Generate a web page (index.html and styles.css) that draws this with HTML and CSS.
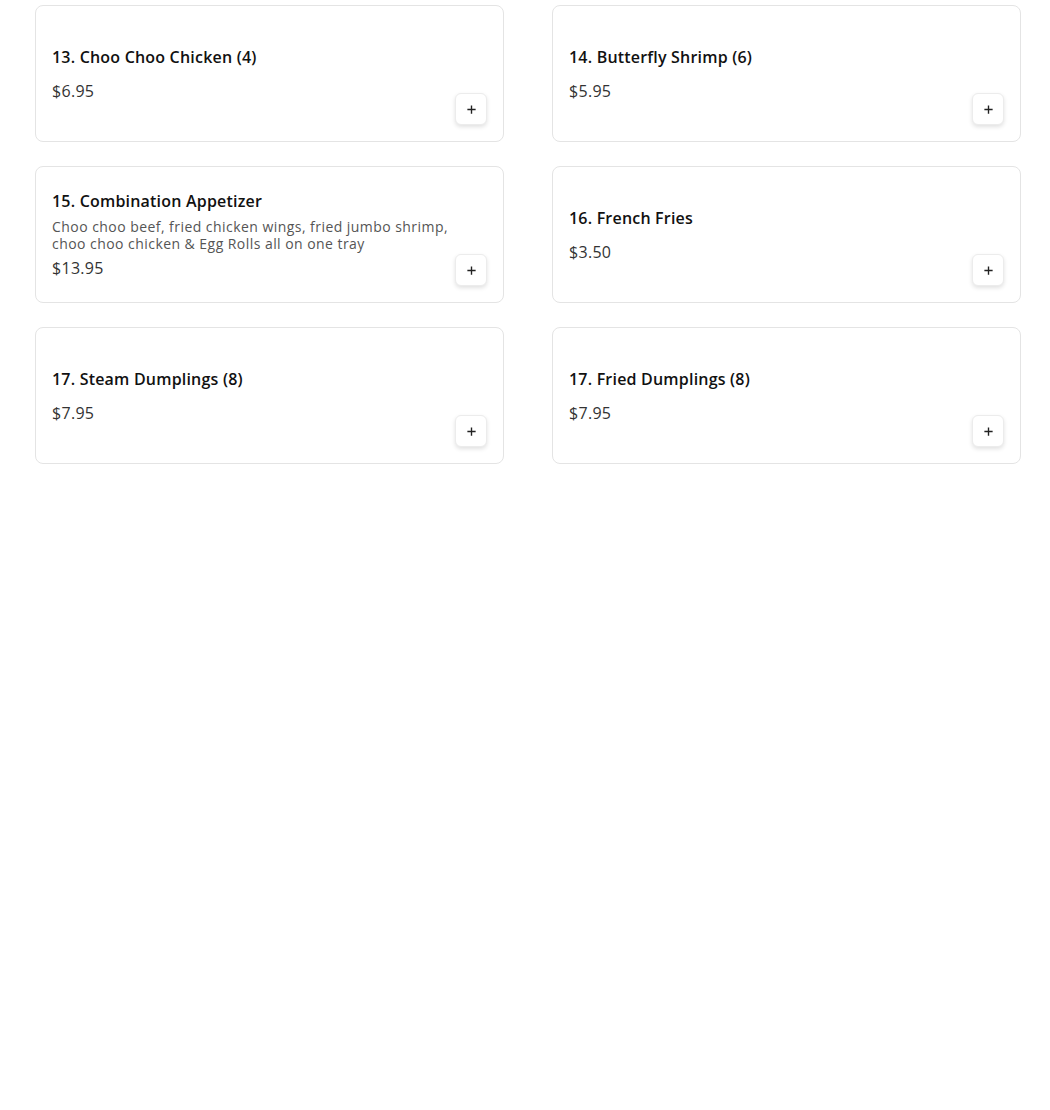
FILE: index.html
```html
<!DOCTYPE html>
<html>
<head>
<meta charset="utf-8">
<link rel="stylesheet" href="styles.css">
</head>
<body>
<div class="grid">
  <div class="card">
    <div class="info">
      <div class="title">13. Choo Choo Chicken (4)</div>
      <div class="price">$6.95</div>
    </div>
    <button class="add" aria-label="Add"><svg viewBox="0 0 12 12" width="12" height="12"><path d="M6 1.5v9M1.5 6h9" stroke="#222" stroke-width="1.5"/></svg></button>
  </div>
  <div class="card">
    <div class="info">
      <div class="title">14. Butterfly Shrimp (6)</div>
      <div class="price">$5.95</div>
    </div>
    <button class="add" aria-label="Add"><svg viewBox="0 0 12 12" width="12" height="12"><path d="M6 1.5v9M1.5 6h9" stroke="#222" stroke-width="1.5"/></svg></button>
  </div>
  <div class="card">
    <div class="info">
      <div class="title">15. Combination Appetizer</div>
      <div class="desc">Choo choo beef, fried chicken wings, fried jumbo shrimp, choo choo chicken &amp; Egg Rolls all on one tray</div>
      <div class="price tight">$13.95</div>
    </div>
    <button class="add" aria-label="Add"><svg viewBox="0 0 12 12" width="12" height="12"><path d="M6 1.5v9M1.5 6h9" stroke="#222" stroke-width="1.5"/></svg></button>
  </div>
  <div class="card">
    <div class="info">
      <div class="title">16. French Fries</div>
      <div class="price">$3.50</div>
    </div>
    <button class="add" aria-label="Add"><svg viewBox="0 0 12 12" width="12" height="12"><path d="M6 1.5v9M1.5 6h9" stroke="#222" stroke-width="1.5"/></svg></button>
  </div>
  <div class="card">
    <div class="info">
      <div class="title">17. Steam Dumplings (8)</div>
      <div class="price">$7.95</div>
    </div>
    <button class="add" aria-label="Add"><svg viewBox="0 0 12 12" width="12" height="12"><path d="M6 1.5v9M1.5 6h9" stroke="#222" stroke-width="1.5"/></svg></button>
  </div>
  <div class="card">
    <div class="info">
      <div class="title">17. Fried Dumplings (8)</div>
      <div class="price">$7.95</div>
    </div>
    <button class="add" aria-label="Add"><svg viewBox="0 0 12 12" width="12" height="12"><path d="M6 1.5v9M1.5 6h9" stroke="#222" stroke-width="1.5"/></svg></button>
  </div>
</div>
</body>
</html>
```
FILE: styles.css
```css
html, body {
  margin: 0;
  padding: 0;
  background: #fff;
}
body {
  font-family: "Open Sans", "Liberation Sans", sans-serif;
  color: #111;
}
.grid {
  display: grid;
  grid-template-columns: 469px 469px;
  column-gap: 48px;
  row-gap: 24px;
  padding: 5px 0 0 35px;
}
.card {
  position: relative;
  box-sizing: border-box;
  height: 137px;
  border: 1px solid #e4e4e4;
  border-radius: 8px;
  padding: 16px;
  display: flex;
}
.info {
  flex: 1;
  align-self: center;
  display: flex;
  flex-direction: column;
}
.title {
  font-size: 16px;
  font-weight: 600;
  line-height: 20px;
  letter-spacing: 0.2px;
  color: #111;
}
.desc {
  margin-top: 7px;
  padding-right: 30px;
  font-size: 14px;
  line-height: 17px;
  letter-spacing: 0.45px;
  color: #555;
}
.price {
  margin-top: 14px;
  font-size: 16px;
  line-height: 20px;
  letter-spacing: 0.3px;
  color: #333;
}
.price.tight {
  margin-top: 6px;
}
.add {
  position: absolute;
  right: 16px;
  bottom: 16px;
  width: 32px;
  height: 32px;
  margin: 0;
  padding: 0;
  border: 1px solid #ececec;
  border-radius: 6px;
  background: #fff;
  box-shadow: 0 2px 4px rgba(0,0,0,0.12);
  display: flex;
  align-items: center;
  justify-content: center;
  cursor: pointer;
}
.add svg {
  display: block;
  width: 11px;
  height: 11px;
}
```
